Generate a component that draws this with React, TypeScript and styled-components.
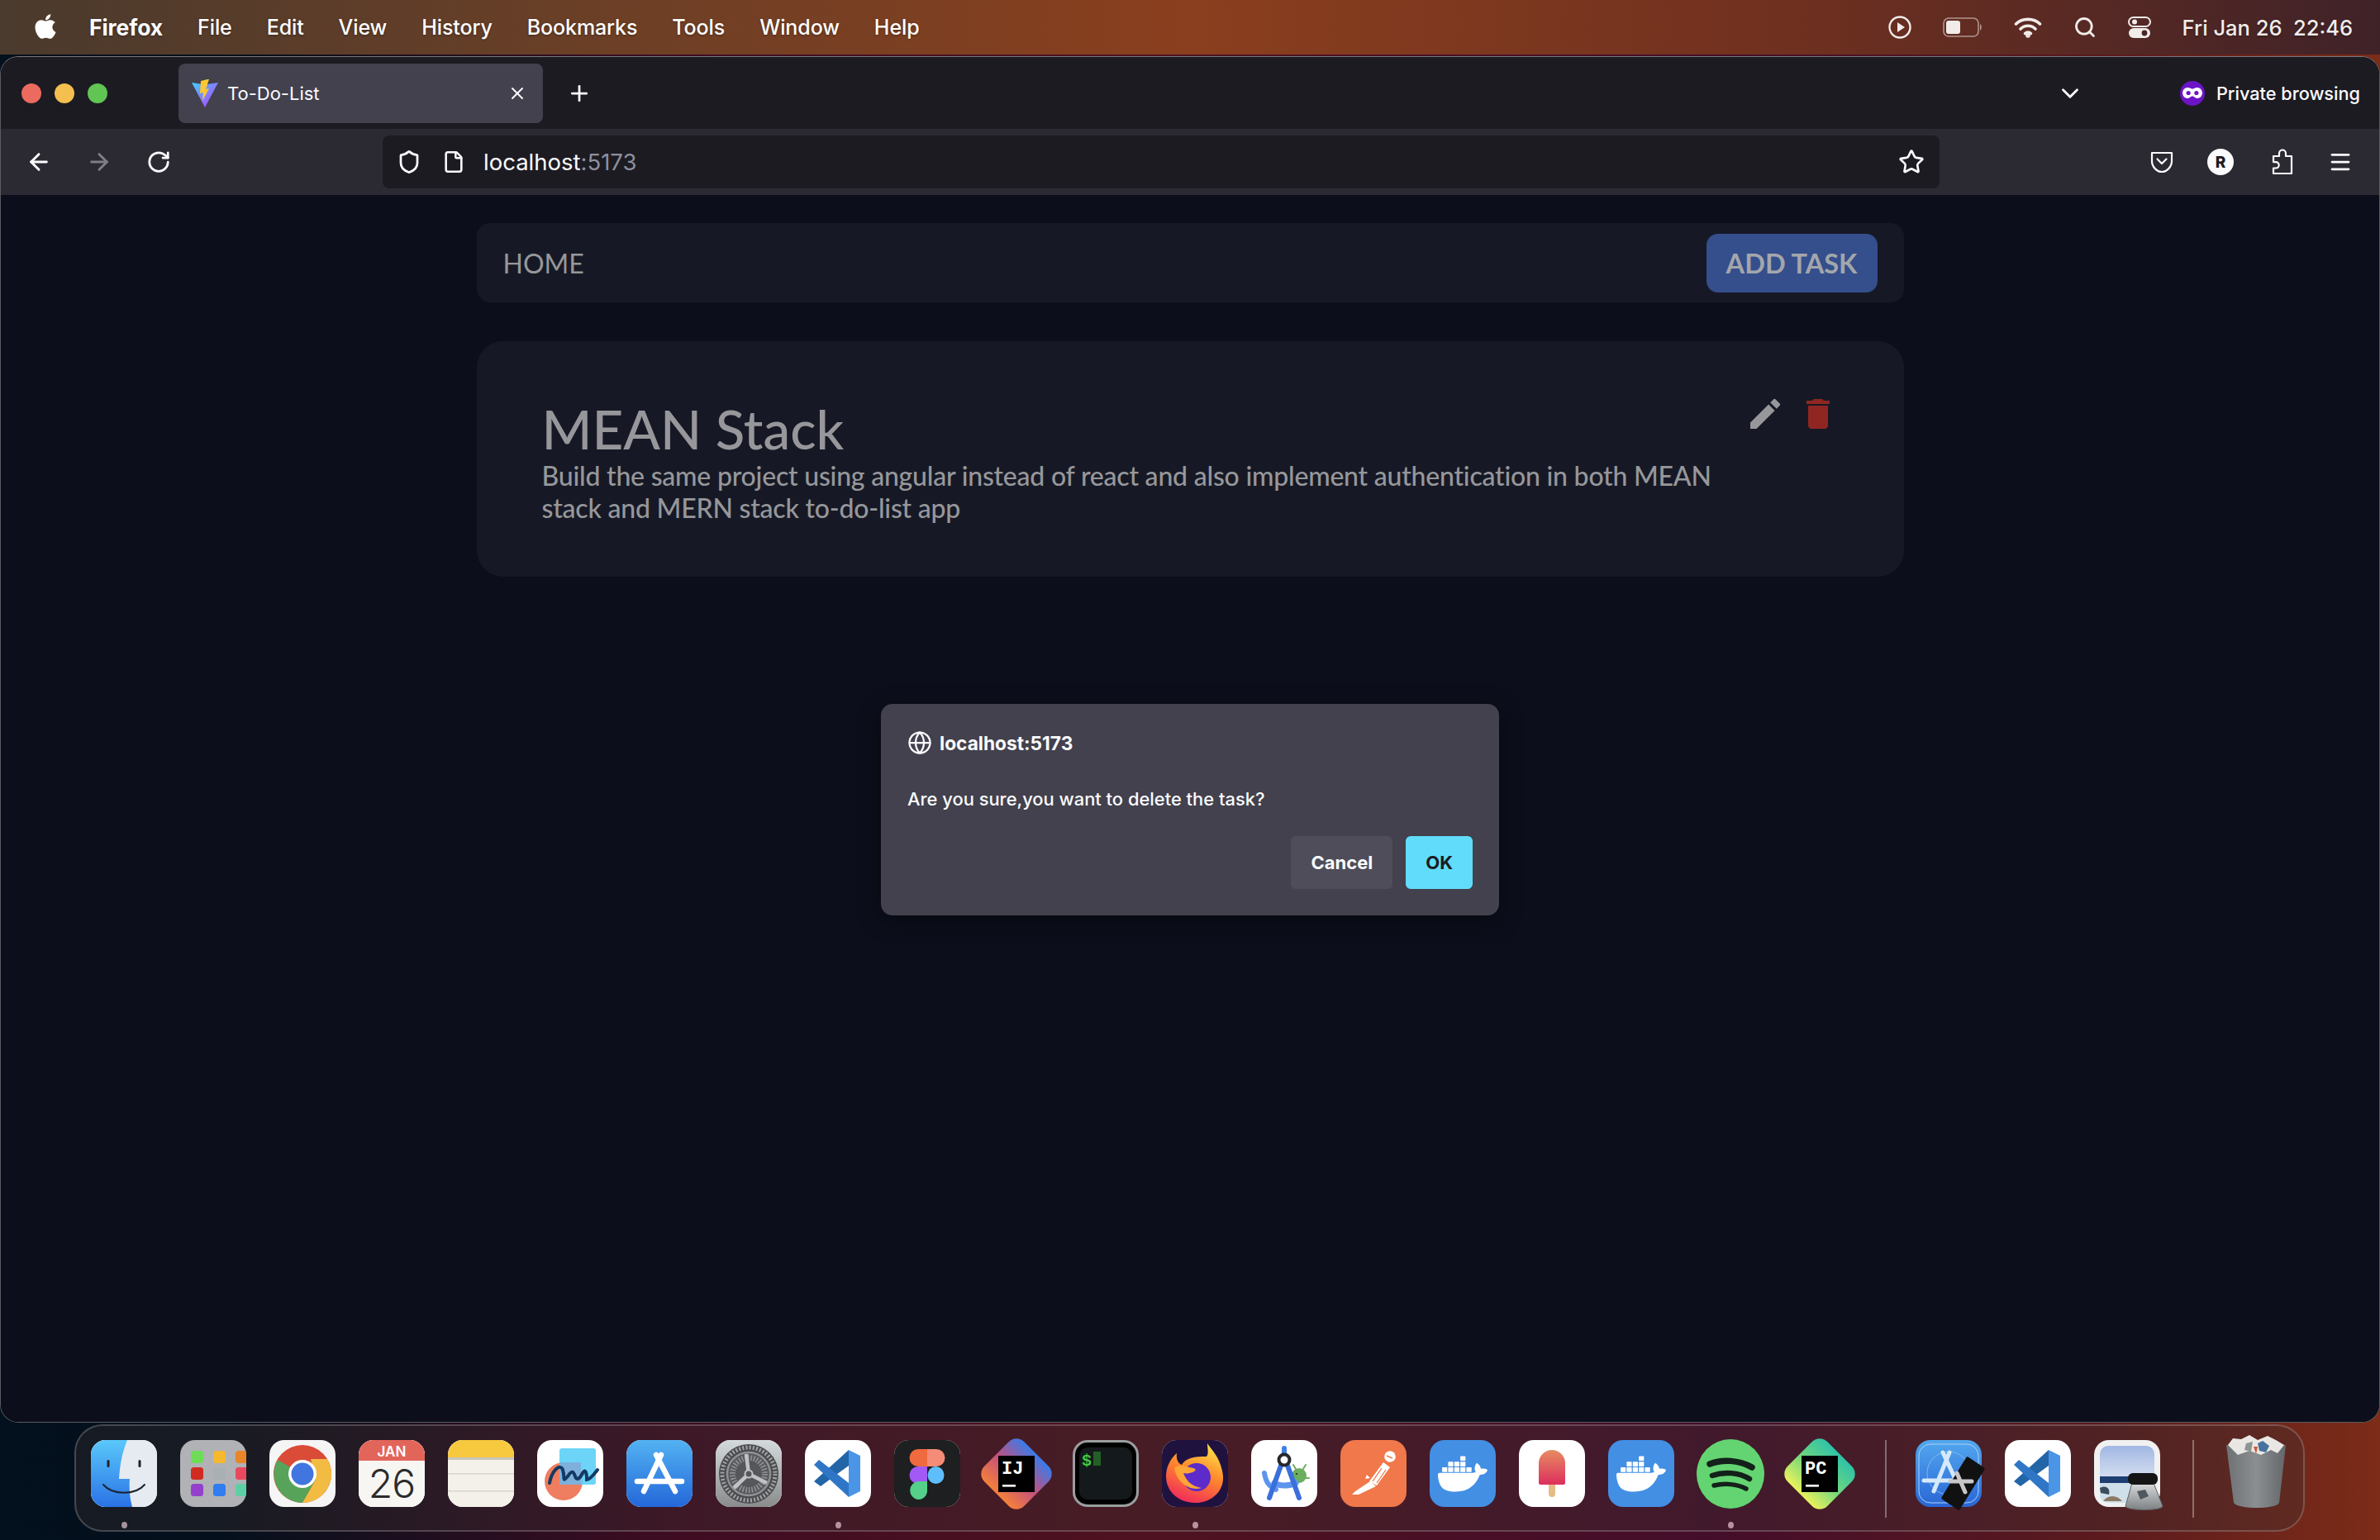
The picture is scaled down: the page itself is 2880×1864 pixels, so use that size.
import React from 'react';
import styled, { createGlobalStyle } from 'styled-components';
import { FaApple } from 'react-icons/fa';
import { MdDelete, MdEdit } from 'react-icons/md';
import { SiDocker } from 'react-icons/si';
import {
	ArrowLeft,
	ArrowRight,
	ChevronDown,
	File,
	Globe,
	Menu,
	Plus,
	RotateCw,
	Search,
	Shield,
	Star,
	X,
} from 'lucide-react';

const GlobalStyle = createGlobalStyle`
	html, body {
		margin: 0;
		width: 2880px;
		height: 1864px;
		overflow: hidden;
		font-family: 'Inter', 'Liberation Sans', sans-serif;
		background: linear-gradient(90deg, #03101d 0%, #04101c 9%, #3e0c22 28%, #4f1220 48%, #440d2a 72%, #5a1a1e 88%, #7c2c18 100%);
	}
`;

const Desktop = styled.div`
	width: 2880px;
	height: 1864px;
	display: flex;
	flex-direction: column;
`;

/* macOS menu bar */
const MenuBar = styled.header`
	height: 66px;
	flex: none;
	display: flex;
	align-items: center;
	padding: 0 33px 0 40px;
	color: #fff;
	background: linear-gradient(90deg, #4a3a2d 0%, #6b3f26 25%, #8a3f1e 50%, #70301f 75%, #3f2228 100%);
	text-shadow: 0 1px 3px rgba(0, 0, 0, 0.35);
`;

const AppleMark = styled(FaApple)`
	width: 30px;
	height: 34px;
	margin-right: 38px;
	margin-top: -3px;
`;

const MenuItem = styled.span<{ $bold?: boolean }>`
	font-size: ${(p) => (p.$bold ? 26.5 : 25)}px;
	font-weight: ${(p) => (p.$bold ? 700 : 500)};
	margin-right: 42px;
	letter-spacing: -0.1px;
`;

const StatusArea = styled.div`
	margin-left: auto;
	display: flex;
	align-items: center;
	gap: 38px;
	color: #f1ecea;
`;

const Clock = styled.span`
	font-size: 25.5px;
	font-weight: 500;
	white-space: pre;
`;

/* browser window */
const BrowserWindow = styled.div`
	height: 1654px;
	margin-top: 2px;
	flex: none;
	display: flex;
	flex-direction: column;
	border-radius: 22px;
	border: 1px solid #5a5b60;
	border-top-color: #77787c;
	box-sizing: border-box;
	overflow: hidden;
	background: #0c0f1b;
`;

const TabStrip = styled.div`
	height: 87px;
	flex: none;
	display: flex;
	align-items: center;
	background: #1c1b22;
	color: #fbfbfe;
	padding-left: 25px;
`;

const TrafficLights = styled.div`
	display: flex;
	gap: 16px;
	margin-right: 86px;
`;

const Light = styled.span<{ $color: string }>`
	width: 24px;
	height: 24px;
	border-radius: 50%;
	background: ${(p) => p.$color};
`;

const Tab = styled.div`
	width: 441px;
	height: 72px;
	box-sizing: border-box;
	display: flex;
	align-items: center;
	padding: 0 19px 0 16px;
	border-radius: 8px;
	background: #42414d;
`;

const TabTitle = styled.span`
	font-size: 22px;
	margin-left: 11px;
	flex: 1;
`;

const NewTab = styled.span`
	display: flex;
	margin-left: 29px;
`;

const TabTail = styled.div`
	margin-left: auto;
	display: flex;
	align-items: center;
	padding-right: 23px;
`;

const PrivateIcon = styled.span`
	width: 30px;
	height: 30px;
	border-radius: 50%;
	background: #6d14c8;
	display: flex;
	align-items: center;
	justify-content: center;
	margin: 0 14px 0 116px;
`;

const PrivateLabel = styled.span`
	font-size: 21.7px;
	font-weight: 500;
`;

const Toolbar = styled.div`
	height: 80px;
	flex: none;
	display: flex;
	align-items: center;
	background: #2b2a33;
	color: #fbfbfe;
	padding-left: 30px;
`;

const NavButton = styled.span<{ $muted?: boolean; $gap?: number }>`
	display: flex;
	opacity: ${(p) => (p.$muted ? 0.4 : 1)};
	margin-right: ${(p) => p.$gap ?? 0}px;
`;

const UrlBar = styled.div`
	width: 1884px;
	height: 64px;
	box-sizing: border-box;
	display: flex;
	align-items: center;
	padding: 0 18px 0 17px;
	border-radius: 8px;
	background: #1c1b22;
`;

const PageIcon = styled(File)`
	margin-left: 25px;
`;

const UrlText = styled.span`
	font-size: 27.5px;
	margin-left: 22px;
	flex: 1;
`;

const UrlPort = styled.span`
	color: #8f8f9d;
`;

const ToolbarRight = styled.div`
	margin-left: auto;
	display: flex;
	align-items: center;
	gap: 40px;
	padding-right: 32px;
`;

const Avatar = styled.span`
	width: 32px;
	height: 32px;
	margin-right: 4px;
	border-radius: 50%;
	background: #fbfbfe;
	color: #1c1b22;
	font-size: 19px;
	font-weight: 800;
	display: flex;
	align-items: center;
	justify-content: center;
`;

/* page */
const Viewport = styled.main`
	position: relative;
	flex: 1;
	background: #0c0f1b;
	font-family: 'Lato', sans-serif;
	color: #97979b;
`;

const Column = styled.div`
	width: 1727px;
	margin: 0 auto;
	padding-top: 34px;
`;

const NavBar = styled.nav`
	height: 96px;
	box-sizing: border-box;
	display: flex;
	align-items: center;
	justify-content: space-between;
	padding: 0 32px;
	border-radius: 16px;
	background: #161925;
`;

const HomeLink = styled.span`
	font-size: 32px;
`;

const AddButton = styled.span`
	width: 207px;
	height: 71px;
	display: flex;
	align-items: center;
	justify-content: center;
	border-radius: 14px;
	background: #354e8c;
	font-size: 32.5px;
	font-weight: 700;
	color: #a3a6ab;
`;

const TaskCard = styled.section`
	margin-top: 47px;
	height: 285px;
	box-sizing: border-box;
	display: flex;
	padding: 64px 80px 0 79px;
	border-radius: 32px;
	background: #161925;
`;

const TaskBody = styled.div`
	width: 1441px;
	padding-top: 4px;
`;

const TaskTitle = styled.h2`
	margin: 0;
	font-size: 65.5px;
	line-height: 75px;
	font-weight: 500;
`;

const TaskText = styled.p`
	margin: 0;
	font-size: 32px;
	line-height: 39px;
	font-weight: 500;
	letter-spacing: -0.22px;
`;

const TaskActions = styled.div`
	margin-left: auto;
	display: flex;
	align-items: flex-start;
	gap: 16px;
`;

const EditIcon = styled(MdEdit)`
	width: 48px;
	height: 48px;
	color: #97979b;
`;

const TrashIcon = styled(MdDelete)`
	width: 48px;
	height: 48px;
	color: #8f2622;
`;

/* the browser's confirm dialog sits over the page */
const DialogLayer = styled.div`
	position: absolute;
	inset: 0;
	display: flex;
	justify-content: center;
	align-items: flex-start;
	padding-top: 616px;
`;

const Dialog = styled.div`
	width: 748px;
	height: 256px;
	box-sizing: border-box;
	padding: 32px;
	display: flex;
	flex-direction: column;
	border-radius: 14px;
	background: #42414d;
	box-shadow: 0 6px 28px rgba(0, 0, 0, 0.45);
	font-family: 'Inter', sans-serif;
	color: #fbfbfe;
`;

const DialogOrigin = styled.div`
	display: flex;
	align-items: center;
	gap: 9px;
	font-size: 22.7px;
	font-weight: 700;
	height: 30px;
`;

const DialogMessage = styled.p`
	margin: 38px 0 0;
	font-size: 21.9px;
	font-weight: 500;
	line-height: 30px;
`;

const DialogButtons = styled.div`
	margin-top: auto;
	display: flex;
	justify-content: flex-end;
	gap: 16px;
`;

const DialogButton = styled.span<{ $primary?: boolean }>`
	height: 64px;
	padding: 0 24px;
	display: flex;
	align-items: center;
	border-radius: 6px;
	font-size: 22px;
	font-weight: 700;
	background: ${(p) => (p.$primary ? '#62dcfb' : '#4e4d59')};
	color: ${(p) => (p.$primary ? '#1c1b22' : '#fbfbfe')};
`;

/* dock */
const Dock = styled.footer`
	width: 2699px;
	height: 130px;
	margin: 2px 0 0 90px;
	box-sizing: border-box;
	display: flex;
	align-items: flex-start;
	gap: 28px;
	padding: 17px 0 0 18px;
	border-radius: 34px;
	border: 2px solid rgba(255, 255, 255, 0.2);
	background: rgba(60, 50, 50, 0.35);
`;

const DockItem = styled.div`
	position: relative;
	width: 80px;
	height: 81px;
	flex: none;
`;

const Tile = styled.div<{ $bg?: string }>`
	width: 80px;
	height: 81px;
	border-radius: 18px;
	overflow: hidden;
	display: flex;
	align-items: center;
	justify-content: center;
	background: ${(p) => p.$bg ?? '#fff'};
`;

const Art = styled.svg`
	display: block;
	width: 80px;
	height: 81px;
	overflow: visible;
`;

const RunningDot = styled.span`
	position: absolute;
	left: 37px;
	bottom: -26px;
	width: 7px;
	height: 8px;
	border-radius: 50%;
	background: rgba(255, 220, 235, 0.62);
`;

const DockDivider = styled.span`
	width: 2px;
	height: 94px;
	flex: none;
	margin: 0 7px 0 11px;
	background: rgba(255, 255, 255, 0.34);
`;

const DockWhale = styled(SiDocker)`
	width: 60px;
	height: 60px;
	color: #fff;
`;

const ViteMark = () => (
	<svg width="32" height="34" viewBox="0 0 32 34">
		<defs>
			<linearGradient id="vt" x1="0" y1="0" x2="1" y2="1">
				<stop offset="0" stopColor="#41d1ff" />
				<stop offset="1" stopColor="#bd34fe" />
			</linearGradient>
		</defs>
		<path d="M0 4 L13 6 L19 6 L32 4 L16 34 Z" fill="url(#vt)" />
		<path d="M19 0 L11 2 L10 17 L14 16 L13 26 L21 11 L17 12 L21 0 Z" fill="#fdc72f" />
	</svg>
);

const PlayStatus = () => (
	<svg width="28" height="28" viewBox="0 0 28 28" fill="none">
		<circle cx="14" cy="14" r="12.5" stroke="currentColor" strokeWidth="2.4" />
		<path d="M11 8 L20 14 L11 20 Z" fill="currentColor" />
	</svg>
);

const BatteryStatus = () => (
	<svg width="48" height="26" viewBox="0 0 48 26" fill="none">
		<rect x="1" y="2" width="42" height="22" rx="6" stroke="currentColor" strokeOpacity="0.55" strokeWidth="1.6" />
		<rect x="4" y="5" width="17" height="16" rx="3" fill="currentColor" />
		<path d="M45 9 C47.5 10.5 47.5 15.5 45 17 Z" fill="currentColor" fillOpacity="0.55" />
	</svg>
);

const WifiStatus = () => (
	<svg width="34" height="26" viewBox="0 0 34 26" fill="none" stroke="currentColor" strokeWidth="3.6" strokeLinecap="round">
		<path d="M2.5 9 C10 1.5 24 1.5 31.5 9" />
		<path d="M8 15 C13 10 21 10 26 15" />
		<path d="M13.5 20.5 C15.5 18.6 18.5 18.6 20.5 20.5" />
		<circle cx="17" cy="23" r="1" fill="currentColor" />
	</svg>
);

const ControlStatus = () => (
	<svg width="28" height="28" viewBox="0 0 28 28">
		<rect x="1" y="2" width="26" height="11" rx="5.5" fill="none" stroke="currentColor" strokeWidth="2" />
		<circle cx="8" cy="7.5" r="3" fill="currentColor" />
		<rect x="1" y="15" width="26" height="12" rx="6" fill="currentColor" />
		<circle cx="20" cy="21" r="3.4" fill="#4a2528" />
	</svg>
);

const PocketMark = () => (
	<svg width="30" height="30" viewBox="0 0 30 30" fill="none" stroke="currentColor" strokeWidth="2.2" strokeLinejoin="round" strokeLinecap="round">
		<path d="M3 4 H27 V14 C27 21 21 27 15 27 C9 27 3 21 3 14 Z" />
		<path d="M9.5 11.5 L15 17 L20.5 11.5" />
	</svg>
);

const PuzzleMark = () => (
	<svg width="30" height="34" viewBox="0 0 30 34" fill="none" stroke="currentColor" strokeWidth="2.2" strokeLinejoin="round">
		<path d="M4 10 H11 V6.5 a4 4 0 0 1 8 0 V10 H26 V31 H4 V24.5 H7 a3.7 3.7 0 0 0 0 -7.4 H4 Z" />
	</svg>
);

const FinderArt = () => (
	<Art viewBox="0 0 80 81">
		<defs>
			<linearGradient id="fn" x1="0" y1="0" x2="0" y2="1">
				<stop offset="0" stopColor="#5ac8fa" />
				<stop offset="1" stopColor="#2a72e5" />
			</linearGradient>
		</defs>
		<rect width="80" height="81" fill="#e6eaf1" />
		<path d="M0 0 H44 C38 14 35 30 34 47 H47 C46 58 47 70 50 81 H0 Z" fill="url(#fn)" />
		<rect x="19.5" y="24" width="3" height="9" rx="1.5" fill="#1c2430" />
		<rect x="57.5" y="24" width="3" height="9" rx="1.5" fill="#1c2430" />
		<path d="M15 54 C26 67 54 67 65 54" fill="none" stroke="#1c2430" strokeWidth="2" strokeLinecap="round" />
	</Art>
);

const launchpadColors = ['#6fdc58', '#f5b82e', '#e8862a', '#d02c22', '#a9b0b4', '#e9485f', '#9440cc', '#2f7df0', '#5dcfa6'];

const LaunchpadArt = () => (
	<Art viewBox="0 0 80 81">
		{launchpadColors.map((color, i) => (
			<rect key={color} x={13 + (i % 3) * 27} y={13 + Math.floor(i / 3) * 20} width="15" height="15" rx="3.5" fill={color} />
		))}
	</Art>
);

const ChromeArt = () => (
	<Art viewBox="0 0 80 81">
		<circle cx="40" cy="41" r="35" fill="#da4b38" />
		<path d="M10 24 A35 35 0 0 0 40 76 L56 48 L40 41 Z" fill="#57a35a" />
		<path d="M70 23 A35 35 0 0 1 40 76 L56 48 L50 23 Z" fill="#f2bc42" />
		<circle cx="40" cy="41" r="17" fill="#fff" />
		<circle cx="40" cy="41" r="13.5" fill="#4175df" />
	</Art>
);

const CalendarArt = () => (
	<Art viewBox="0 0 80 81">
		<rect width="80" height="81" fill="#f7f6f3" />
		<rect width="80" height="25" fill="#e2655a" />
		<text x="40" y="20" textAnchor="middle" fontFamily="Inter, sans-serif" fontSize="17" fontWeight="600" fill="#fff">JAN</text>
		<text x="40" y="70" textAnchor="middle" fontFamily="Inter, sans-serif" fontSize="48" fontWeight="300" letterSpacing="-1" fill="#2b2b2b">26</text>
	</Art>
);

const NotesArt = () => (
	<Art viewBox="0 0 80 81">
		<rect width="80" height="81" fill="#f3f1ea" />
		<rect width="80" height="21" fill="#f6c93f" />
		<rect y="21" width="80" height="3" fill="#c9c6bd" />
		<rect y="40" width="80" height="1.5" fill="#d8d6cf" />
		<rect y="61" width="80" height="1.5" fill="#d8d6cf" />
	</Art>
);

const FreeformArt = () => (
	<Art viewBox="0 0 80 81">
		<circle cx="32" cy="50" r="23" fill="#ef7d5f" />
		<rect x="27" y="10" width="44" height="44" rx="3" fill="#5cd0f6" fillOpacity="0.9" />
		<rect x="27" y="27" width="26" height="27" fill="#7fb0dc" />
		<path d="M15 52 C18 36 28 28 31 36 C34 46 30 52 37 44 C42 36 44 38 46 44 C48 50 52 46 55 40 C57 36 60 36 60 48 C64 48 70 40 73 36" fill="none" stroke="#123a63" strokeWidth="4" strokeLinecap="round" />
	</Art>
);

const AppStoreArt = () => (
	<Art viewBox="0 0 80 81" fill="none" stroke="#fff" strokeLinecap="round">
		<defs>
			<linearGradient id="as" x1="0" y1="0" x2="0" y2="1">
				<stop offset="0" stopColor="#52b2f2" />
				<stop offset="1" stopColor="#2467d9" />
			</linearGradient>
		</defs>
		<rect width="80" height="81" fill="url(#as)" stroke="none" />
		<path d="M42 18 L21 62" strokeWidth="6.5" />
		<path d="M36 18 L59 62" strokeWidth="6.5" />
		<path d="M13 50 H67" strokeWidth="6.5" />
	</Art>
);

const SettingsArt = () => (
	<Art viewBox="0 0 80 81" fill="none">
		<defs>
			<linearGradient id="st" x1="0" y1="0" x2="0" y2="1">
				<stop offset="0" stopColor="#d4dadc" />
				<stop offset="1" stopColor="#8a8c8c" />
			</linearGradient>
		</defs>
		<rect width="80" height="81" fill="url(#st)" />
		<circle cx="40" cy="41" r="36" fill="#4a4c4f" />
		<circle cx="40" cy="41" r="32" stroke="#a2a4a6" strokeWidth="5" strokeDasharray="2 2.2" />
		<circle cx="40" cy="41" r="26" fill="#55575a" stroke="#8f9193" strokeWidth="2.5" />
		<circle cx="40" cy="41" r="19.5" stroke="#8c8e90" strokeWidth="7" strokeDasharray="1.8 1.8" />
		<path d="M40 41 L37 17 M40 41 L62 52 M40 41 L22 58" stroke="#c0c2c4" strokeWidth="4.5" />
		<circle cx="40" cy="41" r="4.5" fill="#55575a" stroke="#c0c2c4" strokeWidth="2" />
	</Art>
);

const VsCodeArt = () => (
	<Art viewBox="0 0 80 81">
		<polygon points="53,12 53,31 19,56 11,50" fill="#2465a8" />
		<polygon points="17,24 53,52 53,69 11,30" fill="#2f77c6" />
		<polygon points="53,12 67,19 67,62 53,69" fill="#4a95e6" />
	</Art>
);

const FigmaArt = () => (
	<Art viewBox="0 0 80 81">
		<rect width="80" height="81" fill="#1d1f20" />
		<path d="M40 11 H29 A10.5 10.5 0 0 0 29 32 H40 Z" fill="#f06a3f" />
		<path d="M40 11 H51 A10.5 10.5 0 0 1 51 32 H40 Z" fill="#f58c78" />
		<path d="M40 32 H29 A10.5 10.5 0 0 0 29 53 H40 Z" fill="#a259f5" />
		<ellipse cx="50.5" cy="42.5" rx="10" ry="10.5" fill="#5ebefb" />
		<path d="M29 50 H40 V63 A10.5 11 0 1 1 29 50 Z" fill="#55cf8a" />
	</Art>
);

const JetBrainsArt = ({ id, from, mid, to, label }: { id: string; from: string; mid: string; to: string; label: string }) => (
	<Art viewBox="0 0 80 81">
		<defs>
			<linearGradient id={id} x1="0" y1="0" x2="0" y2="1">
				<stop offset="0" stopColor={from} />
				<stop offset="0.5" stopColor={mid} />
				<stop offset="1" stopColor={to} />
			</linearGradient>
		</defs>
		<rect x="6" y="7" width="68" height="68" rx="13" fill={`url(#${id})`} transform="rotate(45 40 41)" />
		<rect x="18" y="19" width="44" height="44" fill="#000" />
		<text x="22" y="41" fontFamily="'Liberation Mono', monospace" fontSize="22" fontWeight="700" fill="#fff">{label}</text>
		<rect x="23" y="54" width="16" height="2.6" fill="#fff" />
	</Art>
);

const TerminalArt = () => (
	<Art viewBox="0 0 80 81">
		<rect width="80" height="81" rx="18" fill="#9a9e9f" />
		<rect x="3" y="3" width="74" height="75" rx="15" fill="#000" />
		<rect x="8" y="9" width="64" height="63" rx="10" fill="#141a1b" />
		<text x="11" y="31" fontFamily="'Liberation Mono', monospace" fontSize="20" fontWeight="700" fill="#41c740">$</text>
		<rect x="25" y="14" width="9" height="17" fill="#235f25" />
	</Art>
);

const FirefoxArt = () => (
	<Art viewBox="0 0 80 81">
		<defs>
			<linearGradient id="ff" x1="0.7" y1="0" x2="0.3" y2="1">
				<stop offset="0" stopColor="#ffe04a" />
				<stop offset="0.45" stopColor="#ff8a2b" />
				<stop offset="1" stopColor="#f0285c" />
			</linearGradient>
		</defs>
		<rect width="80" height="81" fill="#20123f" />
		<path d="M55 4 C60 12 72 22 74 44 C75 62 60 76 40 76 C20 76 5 62 5 44 C5 34 9 24 18 16 C17 24 20 28 24 30 C30 20 44 20 54 20 C57 16 55 10 55 4 Z" fill="url(#ff)" />
		<circle cx="42" cy="45" r="17" fill="#5c2bc9" />
		<path d="M15 34 C22 28 28 32 38 34 C46 36 34 42 26 40 C30 50 36 56 48 58 C34 62 18 52 15 34 Z" fill="#ffa436" />
	</Art>
);

const AndroidStudioArt = () => (
	<Art viewBox="0 0 80 81" fill="none" strokeLinecap="round">
		<circle cx="58" cy="43" r="9" fill="#6cae5f" />
		<path d="M51 30 L54 35 M66 30 L63 35 M66 46 H70" stroke="#6cae5f" strokeWidth="2" />
		<circle cx="55" cy="41" r="1" fill="#1c1c1c" />
		<path d="M40 10 V20" stroke="#3f7fe6" strokeWidth="6" />
		<path d="M16 40 C18 52 22 56 30 60" stroke="#5d95ee" strokeWidth="6" />
		<path d="M28 52 C34 56 46 56 54 52" stroke="#5d95ee" strokeWidth="7" />
		<path d="M37 28 L22 70" stroke="#3a6fdc" strokeWidth="6" />
		<path d="M43 28 L58 70" stroke="#3a6fdc" strokeWidth="6" />
		<circle cx="40" cy="24" r="6.5" fill="#fff" stroke="#26282b" strokeWidth="4" />
	</Art>
);

const PostmanArt = () => (
	<Art viewBox="0 0 80 81">
		<circle cx="60" cy="20" r="6.8" fill="#fff" />
		<path d="M56 19 L63 22" stroke="#f0784a" strokeWidth="1.4" />
		<polygon points="52,27 60,33 44,55 35,50" fill="#fff" />
		<path d="M50 34 L39 50 M55 36 L44 52" stroke="#f0784a" strokeWidth="1.3" />
		<polygon points="36,50 43,56 22,66 14,66 18,62" fill="#fff" />
		<polygon points="32,42 36,46 30,47" fill="#fff" />
	</Art>
);

const PopsicleArt = () => (
	<Art viewBox="0 0 80 81">
		<defs>
			<linearGradient id="pp" x1="0" y1="0" x2="0" y2="1">
				<stop offset="0" stopColor="#e78c63" />
				<stop offset="1" stopColor="#dd2f5c" />
			</linearGradient>
		</defs>
		<rect x="36" y="50" width="8" height="19" rx="4" fill="#e6bb85" />
		<path d="M24 28 A16 16 0 0 1 56 28 V52 A2 2 0 0 1 54 54 H26 A2 2 0 0 1 24 52 Z" fill="url(#pp)" />
	</Art>
);

const SpotifyArt = () => (
	<Art viewBox="0 0 80 81" fill="none" stroke="#14201a" strokeLinecap="round">
		<ellipse cx="40" cy="41" rx="41" ry="42" fill="#63d471" stroke="none" />
		<path d="M15 29 C30 23 50 24 66 33" strokeWidth="7.5" />
		<path d="M18 43 C32 38 50 39 63 47" strokeWidth="6.5" />
		<path d="M20 55 C33 52 48 53 59 59" strokeWidth="5.5" />
	</Art>
);

const XcodeBetaArt = () => (
	<Art viewBox="0 0 80 81" fill="none">
		<defs>
			<linearGradient id="xc" x1="0" y1="0" x2="0" y2="1">
				<stop offset="0" stopColor="#52a7ee" />
				<stop offset="1" stopColor="#2a66d6" />
			</linearGradient>
		</defs>
		<rect width="80" height="81" rx="18" fill="url(#xc)" />
		<rect x="4" y="5" width="72" height="71" rx="14" stroke="#a9d3f7" strokeWidth="1" />
		<circle cx="40" cy="40" r="26" stroke="#8fc2ef" strokeWidth="0.8" />
		<path d="M41 15 L22 62 M33 15 L55 62 M10 49 H45" stroke="#d5e9fb" strokeWidth="5" strokeLinecap="round" />
		<polygon points="63,23 81,35 52,82 34,70" fill="#111" stroke="#111" strokeWidth="5" strokeLinejoin="round" />
		<path d="M42 50 H68 M50 40 L60 63" stroke="#c7c7c7" strokeWidth="5" strokeLinecap="round" />
	</Art>
);

const PreviewArt = () => (
	<Art viewBox="0 0 80 81">
		<defs>
			<linearGradient id="pv" x1="0" y1="0" x2="0" y2="1">
				<stop offset="0" stopColor="#a1b8e4" />
				<stop offset="1" stopColor="#d2dcef" />
			</linearGradient>
			<linearGradient id="pg" x1="0" y1="0" x2="0" y2="1">
				<stop offset="0" stopColor="#d9dbdd" />
				<stop offset="1" stopColor="#7d8184" />
			</linearGradient>
		</defs>
		<rect width="80" height="81" rx="18" fill="#f1f1f1" />
		<path d="M7 17 A10 10 0 0 1 17 7 H63 A10 10 0 0 1 73 17 V44 H7 Z" fill="url(#pv)" />
		<rect x="7" y="44" width="66" height="8" fill="#1f3f73" />
		<path d="M7 52 H73 V66 A10 10 0 0 1 63 76 H17 A10 10 0 0 1 7 66 Z" fill="#cfe0ea" />
		<path d="M7 58 C14 54 20 58 18 66 L8 64 Z" fill="#3c4c5c" />
		<path d="M11 74 C16 66 28 66 34 74 Z" fill="#8c7a64" />
		<path d="M46 52 H72 L83 80 C83 86 39 86 38 80 Z" fill="url(#pg)" stroke="#5e6265" strokeWidth="1" />
		<rect x="41" y="40" width="36" height="14" rx="6" fill="#151515" />
		<path d="M52 62 L62 60 L66 68 L56 72 Z" fill="#4e5861" />
	</Art>
);

const TrashArt = () => (
	<Art viewBox="0 0 80 81">
		<defs>
			<linearGradient id="tr" x1="0" y1="0" x2="1" y2="0">
				<stop offset="0" stopColor="#6d7173" />
				<stop offset="0.5" stopColor="#8b8f91" />
				<stop offset="1" stopColor="#63676a" />
			</linearGradient>
		</defs>
		<path d="M4 6 H76 L68 76 C64 84 18 84 13 76 Z" fill="url(#tr)" />
		<path d="M6 6 L12 -2 L22 -1 L32 -6 L42 0 L54 -5 L64 0 L74 6 L66 16 L58 12 L46 18 L32 13 L18 18 Z" fill="#e9e7e4" />
		<path d="M42 4 L48 1 L56 7 L52 15 L44 13 Z" fill="#46729d" />
		<path d="M28 4 L36 2 L34 14 L26 12 Z" fill="#8f9394" />
		<path d="M37 8 L42 8 L40 17 Z" fill="#cc5a37" />
	</Art>
);

const dockApps: { key: string; bg?: string; running?: boolean; bare?: boolean; art: React.ReactNode }[] = [
	{ key: 'finder', running: true, art: <FinderArt /> },
	{ key: 'launchpad', bg: '#b0b2b6', art: <LaunchpadArt /> },
	{ key: 'chrome', bg: '#f5f5f5', art: <ChromeArt /> },
	{ key: 'calendar', art: <CalendarArt /> },
	{ key: 'notes', art: <NotesArt /> },
	{ key: 'freeform', art: <FreeformArt /> },
	{ key: 'appstore', art: <AppStoreArt /> },
	{ key: 'settings', art: <SettingsArt /> },
	{ key: 'vscode', running: true, art: <VsCodeArt /> },
	{ key: 'figma', art: <FigmaArt /> },
	{ key: 'idea', bare: true, art: <JetBrainsArt id="ij" from="#3a7bea" mid="#c2507f" to="#f5803a" label="IJ" /> },
	{ key: 'terminal', bare: true, art: <TerminalArt /> },
	{ key: 'firefox', running: true, art: <FirefoxArt /> },
	{ key: 'studio', art: <AndroidStudioArt /> },
	{ key: 'postman', bg: '#f0784a', art: <PostmanArt /> },
	{ key: 'docker', bg: '#438fe4', art: <DockWhale /> },
	{ key: 'popsicle', art: <PopsicleArt /> },
	{ key: 'docker2', bg: '#438fe4', art: <DockWhale /> },
	{ key: 'spotify', bare: true, running: true, art: <SpotifyArt /> },
	{ key: 'pycharm', bare: true, art: <JetBrainsArt id="pc" from="#2fc3a8" mid="#6fd67e" to="#eaf25c" label="PC" /> },
];

const recentApps: { key: string; bare?: boolean; art: React.ReactNode }[] = [
	{ key: 'xcode', bare: true, art: <XcodeBetaArt /> },
	{ key: 'vscode2', art: <VsCodeArt /> },
	{ key: 'preview', bare: true, art: <PreviewArt /> },
];

const App = () => {
	return (
		<Desktop>
			<GlobalStyle />
			<MenuBar>
				<AppleMark />
				<MenuItem $bold>Firefox</MenuItem>
				<MenuItem>File</MenuItem>
				<MenuItem>Edit</MenuItem>
				<MenuItem>View</MenuItem>
				<MenuItem>History</MenuItem>
				<MenuItem>Bookmarks</MenuItem>
				<MenuItem>Tools</MenuItem>
				<MenuItem>Window</MenuItem>
				<MenuItem>Help</MenuItem>
				<StatusArea>
					<PlayStatus />
					<BatteryStatus />
					<WifiStatus />
					<Search size={28} strokeWidth={2.4} />
					<ControlStatus />
					<Clock>Fri Jan 26  22:46</Clock>
				</StatusArea>
			</MenuBar>

			<BrowserWindow>
				<TabStrip>
					<TrafficLights>
						<Light $color="#ed6a5e" />
						<Light $color="#f4bf4f" />
						<Light $color="#61c554" />
					</TrafficLights>
					<Tab>
						<ViteMark />
						<TabTitle>To-Do-List</TabTitle>
						<X size={24} strokeWidth={2} />
					</Tab>
					<NewTab>
						<Plus size={30} strokeWidth={2.2} />
					</NewTab>
					<TabTail>
						<ChevronDown size={34} strokeWidth={2} />
						<PrivateIcon>
							<svg width="24" height="13" viewBox="0 0 22 12">
								<path d="M6 0 C8 0 9.5 1.5 11 1.5 C12.5 1.5 14 0 16 0 C19.5 0 22 2.5 22 6 C22 9.5 19.5 12 16 12 C14 12 12.5 9.5 11 9.5 C9.5 9.5 8 12 6 12 C2.5 12 0 9.5 0 6 C0 2.5 2.5 0 6 0 Z" fill="#fff" />
								<circle cx="6.5" cy="6" r="2.4" fill="#6d14c8" />
								<circle cx="15.5" cy="6" r="2.4" fill="#6d14c8" />
							</svg>
						</PrivateIcon>
						<PrivateLabel>Private browsing</PrivateLabel>
					</TabTail>
				</TabStrip>

				<Toolbar>
					<NavButton $gap={41}>
						<ArrowLeft size={32} strokeWidth={2.2} />
					</NavButton>
					<NavButton $muted $gap={41}>
						<ArrowRight size={32} strokeWidth={2.2} />
					</NavButton>
					<NavButton $gap={256}>
						<RotateCw size={30} strokeWidth={2.2} />
					</NavButton>
					<UrlBar>
						<Shield size={30} strokeWidth={2.2} />
						<PageIcon size={28} strokeWidth={2.2} />
						<UrlText>
							localhost<UrlPort>:5173</UrlPort>
						</UrlText>
						<Star size={32} strokeWidth={2} />
					</UrlBar>
					<ToolbarRight>
						<PocketMark />
						<Avatar>R</Avatar>
						<PuzzleMark />
						<Menu size={30} strokeWidth={2.2} />
					</ToolbarRight>
				</Toolbar>

				<Viewport>
					<Column>
						<NavBar>
							<HomeLink>HOME</HomeLink>
							<AddButton>ADD TASK</AddButton>
						</NavBar>
						<TaskCard>
							<TaskBody>
								<TaskTitle>MEAN Stack</TaskTitle>
								<TaskText>
									Build the same project using angular instead of react and also implement authentication in both MEAN stack and MERN stack to-do-list app
								</TaskText>
							</TaskBody>
							<TaskActions>
								<EditIcon />
								<TrashIcon />
							</TaskActions>
						</TaskCard>
					</Column>
					<DialogLayer>
						<Dialog>
							<DialogOrigin>
								<Globe size={30} strokeWidth={1.8} />
								localhost:5173
							</DialogOrigin>
							<DialogMessage>Are you sure,you want to delete the task?</DialogMessage>
							<DialogButtons>
								<DialogButton>Cancel</DialogButton>
								<DialogButton $primary>OK</DialogButton>
							</DialogButtons>
						</Dialog>
					</DialogLayer>
				</Viewport>
			</BrowserWindow>

			<Dock>
				{dockApps.map((app) => (
					<DockItem key={app.key}>
						{app.bare ? app.art : <Tile $bg={app.bg}>{app.art}</Tile>}
						{app.running && <RunningDot />}
					</DockItem>
				))}
				<DockDivider />
				{recentApps.map((app) => (
					<DockItem key={app.key}>{app.bare ? app.art : <Tile>{app.art}</Tile>}</DockItem>
				))}
				<DockDivider />
				<DockItem>
					<TrashArt />
				</DockItem>
			</Dock>
		</Desktop>
	);
};

export default App;
